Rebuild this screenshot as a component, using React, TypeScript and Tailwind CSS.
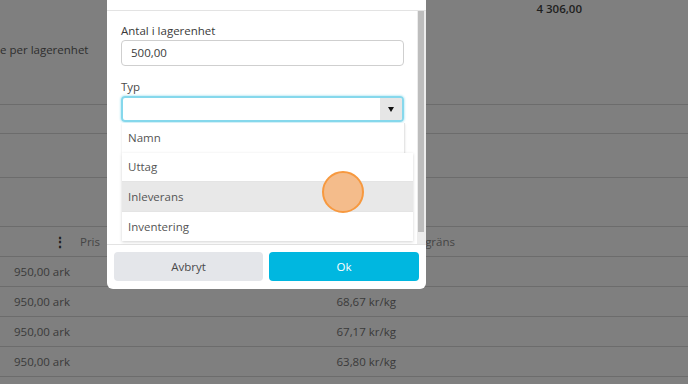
import React from "react";

const font = { fontFamily: '"Open Sans", "Liberation Sans", sans-serif' };

function Row({ left, right }: { left?: string; right?: string }) {
  return (
    <div className="flex h-[30px] items-center border-b border-[#6c6c6c] text-[11.5px] text-[#3a3a3a]">
      <div className="w-[75px] pl-[14px] whitespace-nowrap">{left}</div>
      <div className="w-[321px] text-right whitespace-nowrap">{right}</div>
      <div className="flex-1" />
    </div>
  );
}

export default function App() {
  return (
    <div className="relative h-[384px] w-[688px] overflow-hidden bg-[#7f7f7f]" style={font}>
      {/* background page */}
      <div className="flex flex-col">
        <div className="relative h-[105px] border-b border-[#6c6c6c]">
          <div className="flex w-[582px] justify-end pt-[1px] text-[11.5px] font-semibold leading-[16px] text-[#1e1e1e]">
            4 306,00
          </div>
          <div className="mt-[25px] whitespace-nowrap text-[11.5px] leading-[16px] text-[#2e2e2e]">
            e per lagerenhet
          </div>
        </div>
        <div className="h-[29px] border-b border-[#6c6c6c]" />
        <div className="h-[44px] border-b border-[#6c6c6c]" />
        <div className="h-[49px] border-b border-[#6c6c6c]" />
        <div className="flex h-[30px] items-center border-b border-[#6c6c6c] text-[11.5px] text-[#454545]">
          <div className="w-[75px] pl-[53px] text-[14px] font-bold leading-none text-[#1e1e1e]">⋮</div>
          <div className="w-[300px] pl-[5px]">Pris</div>
          <div className="flex w-[80px] justify-end whitespace-nowrap">Beställningsgräns</div>
        </div>
        <Row left="950,00 ark" />
        <Row left="950,00 ark" right="68,67 kr/kg" />
        <Row left="950,00 ark" right="67,17 kr/kg" />
        <Row left="950,00 ark" right="63,80 kr/kg" />
        <Row />
      </div>

      {/* dialog */}
      <div className="absolute left-[107px] top-0 flex h-[289px] w-[319px] flex-col overflow-hidden rounded-b-[6px] bg-white">
        <div className="h-[11px] border-b border-[#e3e3e3]" />
        <div className="flex h-[234px] border-b border-[#e3e3e3]">
          <div className="relative flex-1 pl-[14px] pr-[13px] pt-[12px]">
            <div className="h-[16px] text-[11.5px] leading-[16px] text-[#3a3a3a]">Antal i lagerenhet</div>
            <div className="mt-[1px] flex h-[26px] items-center rounded-[4px] border border-[#cfcfcf] pl-[9px] text-[11.5px] text-[#3a3a3a]">
              500,00
            </div>
            <div className="mt-[13px] h-[16px] text-[11.5px] leading-[16px] text-[#4a4a4a]">Typ</div>
            <div className="relative mt-[1px]">
              <div className="flex h-[26px] overflow-hidden rounded-[4px] border-2 border-[#86d8ec] shadow-[0_0_2px_1px_#c8eef7]">
                <div className="flex-1" />
                <div className="flex w-[22px] items-center justify-center bg-[#e6e6e6]">
                  <div className="h-0 w-0 border-x-[3.5px] border-t-[5px] border-x-transparent border-t-[#111]" />
                </div>
              </div>
              <div className="absolute left-[1px] top-[27px] w-[291px] text-[11.5px] text-[#555]">
                <div className="flex h-[30px] w-[283px] items-center border-r border-[#e6e6e6] bg-white pl-[6px] shadow-[0_1px_2px_rgba(0,0,0,0.12)]">
                  Namn
                </div>
                <div className="shadow-[0_1px_3px_rgba(0,0,0,0.18)]">
                  <div className="flex h-[29px] items-center border-b border-[#e4e4e4] bg-white pl-[6px]">Uttag</div>
                  <div className="flex h-[30px] items-center border-b border-[#e4e4e4] bg-[#e8e8e8] pl-[6px]">Inleverans</div>
                  <div className="flex h-[29px] items-center bg-white pl-[6px]">Inventering</div>
                </div>
              </div>
            </div>
          </div>
          <div className="flex w-[9px] flex-col bg-[#ececec]">
            <div className="mx-[1px] h-[221px] w-[6px] bg-[#bdbdbd]" />
          </div>
        </div>
        <div className="flex gap-[6px] px-[7px] pt-[7px]">
          <div className="flex h-[29px] w-[149px] items-center justify-center rounded-[4px] bg-[#e4e6ea] text-[11.5px] text-[#4a4a4a]">
            Avbryt
          </div>
          <div className="flex h-[29px] flex-1 items-center justify-center rounded-[4px] bg-[#00b7e0] text-[11.5px] font-medium text-white">
            Ok
          </div>
        </div>
      </div>

      {/* touch indicator */}
      <div className="absolute left-[322px] top-[171px] h-[42px] w-[42px] rounded-full border-2 border-[#f7993f] bg-[#f4bc8b]" />
    </div>
  );
}
